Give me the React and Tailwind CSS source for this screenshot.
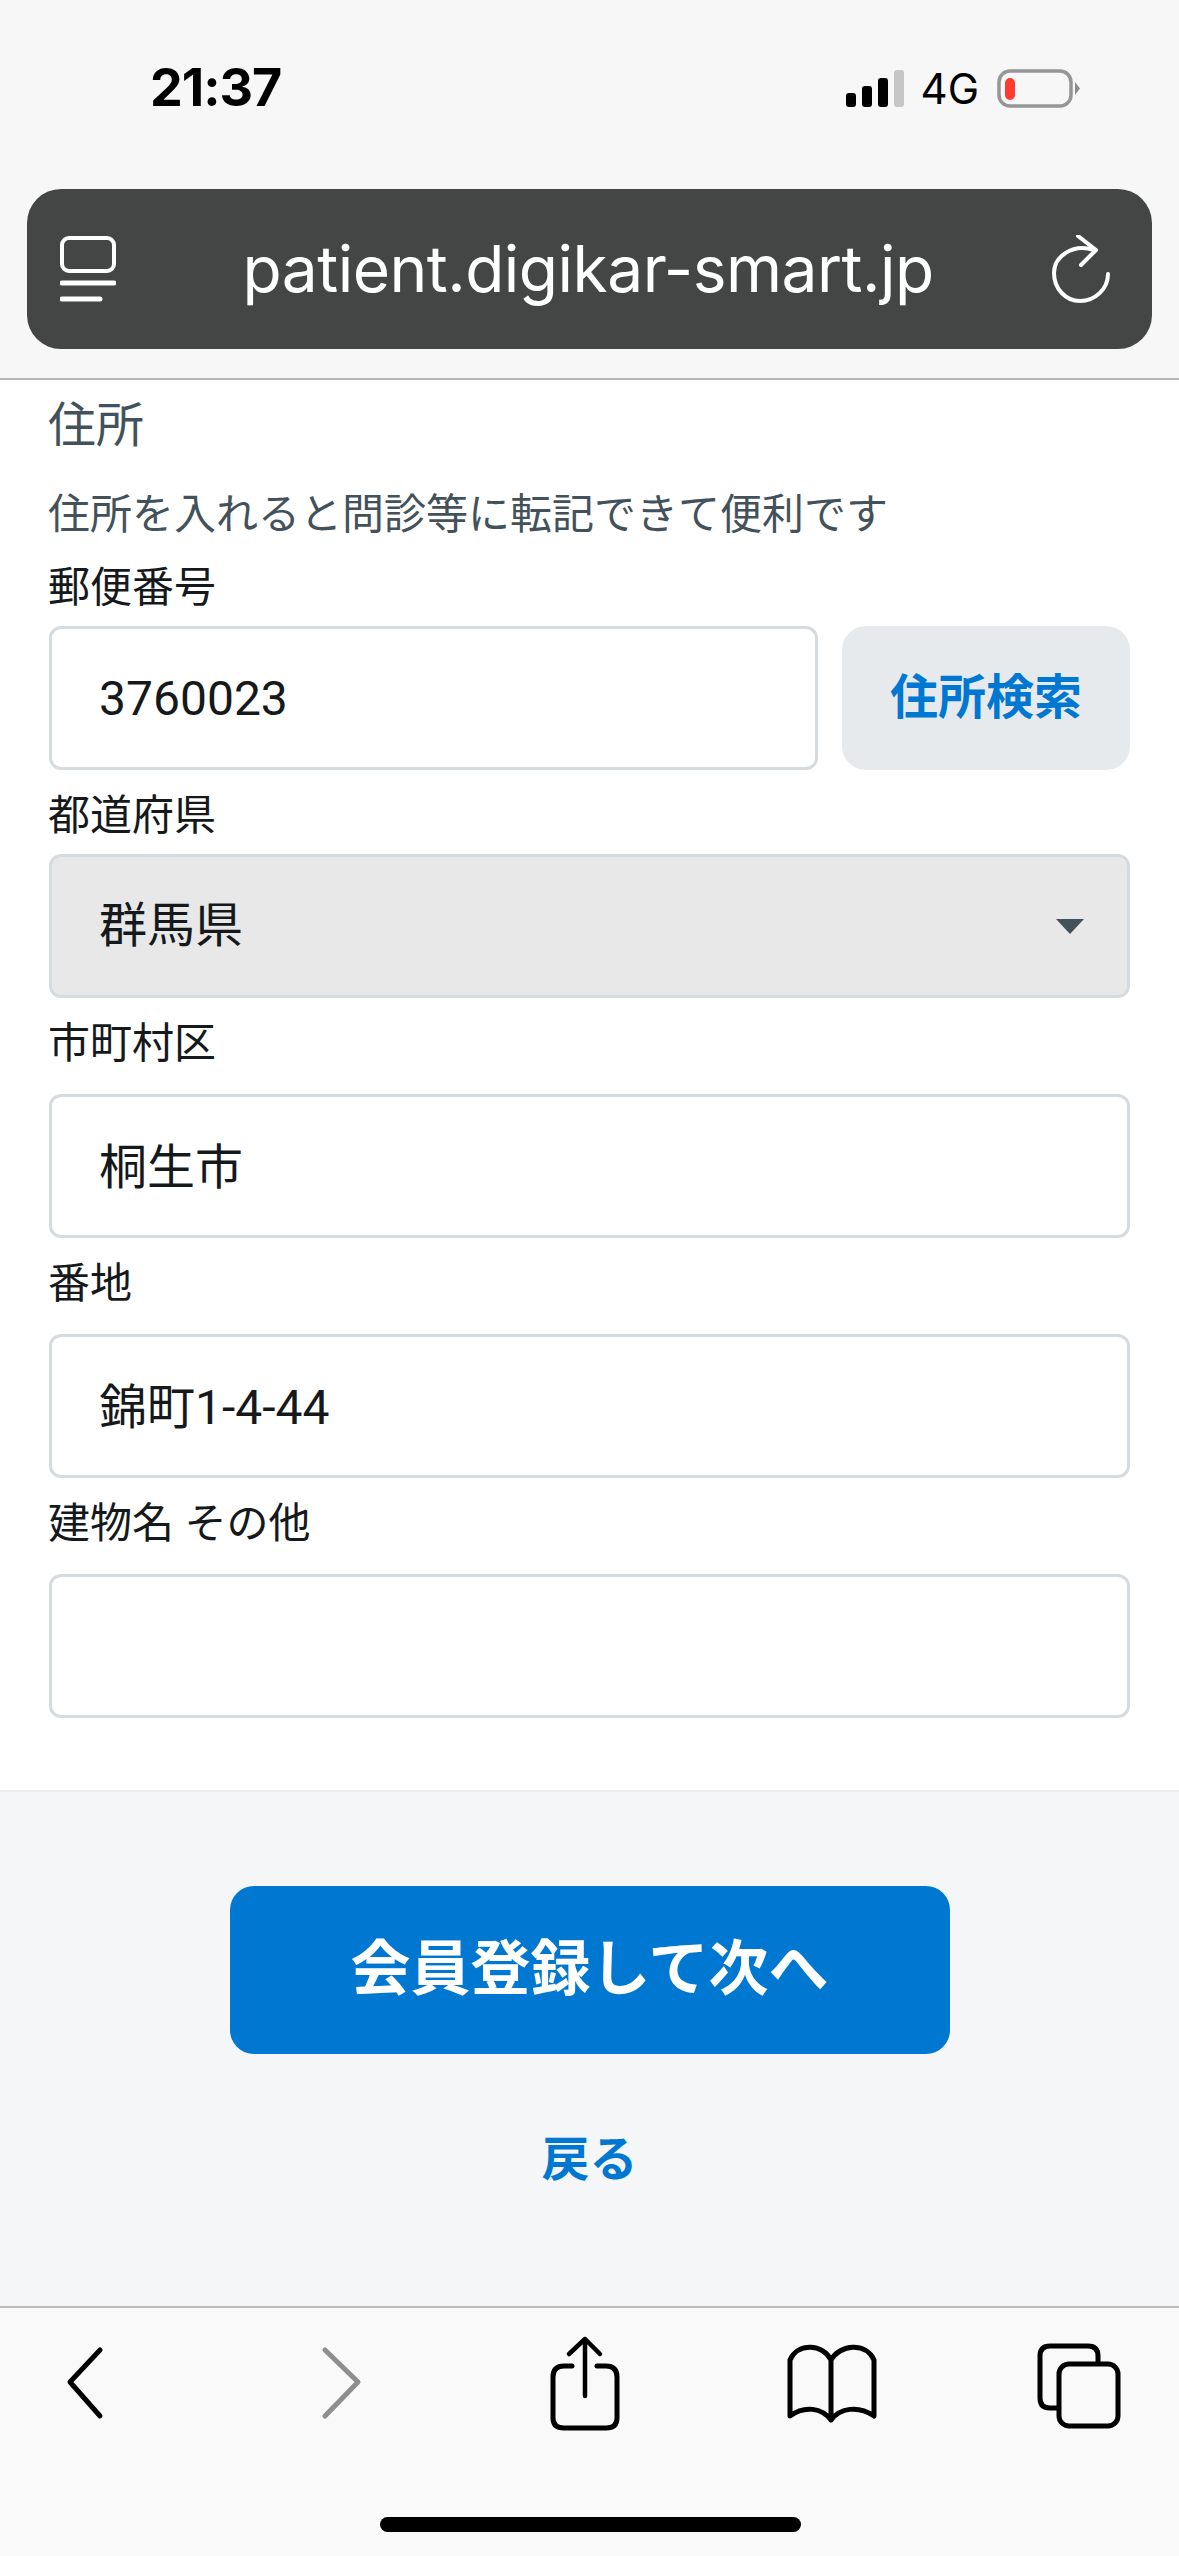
import React from 'react';

const font = "font-['Roboto','Noto_Sans_CJK_JP',sans-serif]";

function Signal() {
  return (
    <svg width="60" height="40" viewBox="0 0 60 40">
      <rect x="0" y="24" width="10" height="14" rx="3" fill="#000" />
      <rect x="16" y="17" width="10" height="21" rx="3" fill="#000" />
      <rect x="32" y="9" width="10" height="29" rx="3" fill="#000" />
      <rect x="48" y="1" width="10" height="37" rx="3" fill="#c6c6c6" />
    </svg>
  );
}

function Battery() {
  return (
    <svg width="84" height="40" viewBox="0 0 84 40">
      <rect x="2" y="2" width="72" height="35" rx="11" fill="none" stroke="#969696" strokeWidth="3.5" />
      <rect x="8" y="9" width="10" height="22" rx="5" fill="#ff3b30" />
      <path d="M78 13 L83 19.5 L78 26 Z" fill="#8c8c8c" />
    </svg>
  );
}

function TabsIcon() {
  return (
    <svg width="56" height="66" viewBox="0 0 56 66" fill="none" stroke="#fff" strokeWidth="4" strokeLinecap="round">
      <rect x="2" y="2" width="52" height="33" rx="7" />
      <path d="M2 47 H54" strokeWidth="5" />
      <path d="M2 63 H40" strokeWidth="5" />
    </svg>
  );
}

function Reload() {
  return (
    <svg width="58" height="68" viewBox="0 0 58 68" fill="none" stroke="#fff" strokeWidth="4" strokeLinecap="round" strokeLinejoin="round">
      <path d="M42 15 C20 8 2 22 2 38 C2 54 14 66 28 66 C43 66 56 54 56 39" />
      <path d="M26 1 L44 15 L29 30" />
    </svg>
  );
}

function Label({ children, className = '' }) {
  return <div className={`-ml-[1px] text-[42px] leading-[60px] text-[#16191c] ${className}`}>{children}</div>;
}

function Field({ value, className = '' }) {
  return (
    <div className={`h-[144px] flex items-center px-[47px] text-[48px] text-[#16191c] bg-white border-[3px] border-[#d5dbde] rounded-[12px] ${className}`}>
      {value}
    </div>
  );
}

export default function App() {
  return (
    <div className={`w-[1179px] h-[2556px] flex flex-col overflow-hidden bg-[#f5f6f8] ${font}`}>
      <header className="h-[380px] shrink-0 bg-[#f7f7f7] border-b-2 border-[#b9b9b9] flex flex-col">
        <div className="h-[189px] flex justify-between pt-[60px] pl-[150px] pr-[98px]">
          <span className="text-[52px] leading-[56px] font-bold text-black font-['Inter','Liberation_Sans',sans-serif] tracking-[-1px]">21:37</span>
          <div className="flex items-start pt-[9px]">
            <Signal />
            <span className="ml-[15px] mr-[18px] pt-[1px] text-[42px] leading-[38px] text-black font-['Inter','Liberation_Sans',sans-serif]">4G</span>
            <Battery />
          </div>
        </div>
        <div className="mx-[27px] h-[160px] rounded-[34px] bg-[#444545] flex items-center justify-between pl-[33px] pr-[42px]">
          <TabsIcon />
          <span className="ml-[8px] text-[64px] text-white font-['Inter','Liberation_Sans',sans-serif] tracking-[-0.5px]">patient.digikar-smart.jp</span>
          <Reload />
        </div>
      </header>

      <main className="h-[1412px] shrink-0 bg-white border-b-2 border-[#eceeef] px-[49px] pt-[14px]">
        <div className="-ml-[1px] text-[48px] leading-[64px] text-[#43525a]">住所</div>
        <div className="-ml-[1px] mt-[27px] text-[42px] leading-[60px] text-[#43525a]">住所を入れると問診等に転記できて便利です</div>
        <Label className="mt-[13px]">郵便番号</Label>
        <div className="mt-[8px] flex gap-[24px]">
          <Field value="3760023" className="flex-1 pt-[2px]" />
          <button className="w-[288px] h-[144px] rounded-[24px] bg-[#e7eaed] text-[48px] font-bold text-[#0078d2]">住所検索</button>
        </div>
        <Label className="mt-[16px]">都道府県</Label>
        <div className="mt-[8px] h-[144px] flex items-center justify-between pl-[47px] pr-[42px] text-[48px] text-[#16191c] bg-[#e8e8e8] border-[3px] border-[#d5dbde] rounded-[12px]">
          <span>群馬県</span>
          <svg width="30" height="17" viewBox="0 0 30 17"><path d="M1 1 H29 L15 16 Z" fill="#43525a" /></svg>
        </div>
        <Label className="mt-[16px]">市町村区</Label>
        <Field value="桐生市" className="mt-[20px] pt-[4px]" />
        <Label className="mt-[16px]">番地</Label>
        <Field value="錦町1-4-44" className="mt-[20px] pt-[4px]" />
        <Label className="mt-[16px]">建物名 その他</Label>
        <Field value="" className="mt-[20px]" />
      </main>

      <section className="h-[514px] shrink-0 flex flex-col items-center pt-[94px]">
        <button className="w-[720px] h-[168px] rounded-[24px] bg-[#0078d2] text-white text-[60px] font-bold">会員登録して次へ</button>
        <div className="mt-[76px] text-[48px] leading-[60px] font-bold text-[#0078d2]">戻る</div>
      </section>

      <footer className="flex-1 bg-[#f9f9f9] border-t-2 border-[#bdbdbd] relative">
        <svg width="1179" height="130" viewBox="0 0 1179 130" className="block mt-[22px]" fill="none" stroke="#000" strokeWidth="5" strokeLinecap="round" strokeLinejoin="round">
          <path d="M100 20 L70 52 L100 86" />
          <path d="M325 20 L358 52 L325 86" stroke="#8e8e8e" />
          <path d="M572 36 H564 Q553 36 553 47 V88 Q553 98 564 98 H606 Q617 98 617 88 V47 Q617 36 606 36 H597" />
          <path d="M585 9 V66 M569 24 L585 9 L600 24" strokeWidth="4.5" />
          <path d="M831 30 C823 14 798 12 790 30 V86 C805 75 822 78 831 90 C840 78 858 75 874 86 V30 C866 12 840 14 831 30 V90" />
          <path d="M1056 78 H1050 Q1040 78 1040 68 V26 Q1040 16 1050 16 H1088 Q1098 16 1098 26 V33" />
          <rect x="1059" y="34" width="59" height="62" rx="10" />
        </svg>
        <div className="absolute left-[380px] top-[209px] w-[421px] h-[15px] rounded-full bg-black" />
      </footer>
    </div>
  );
}
